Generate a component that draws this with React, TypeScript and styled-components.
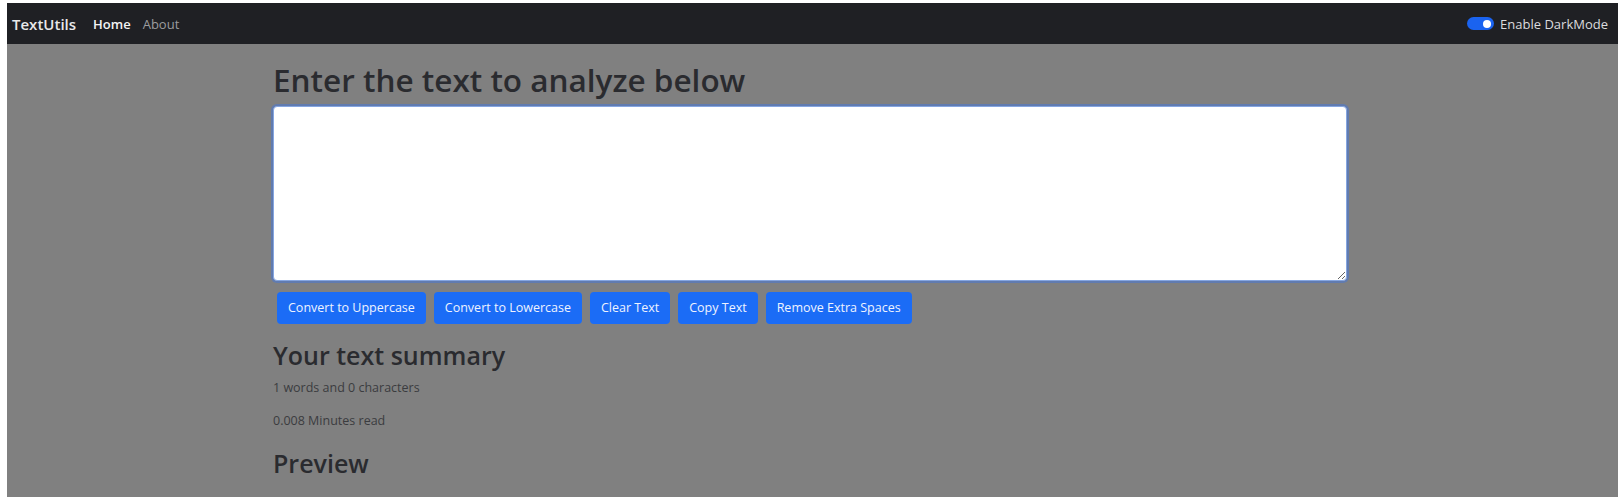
import styled, { createGlobalStyle } from 'styled-components';

const GlobalStyle = createGlobalStyle`
	html, body {
		margin: 0;
		background: #ffffff;
	}
	body {
		padding: 3px 5px 5px 7px;
		font-family: 'Open Sans', 'Noto Sans', sans-serif;
	}
	* {
		box-sizing: border-box;
	}
`;

const buttons = [
	'Convert to Uppercase',
	'Convert to Lowercase',
	'Clear Text',
	'Copy Text',
	'Remove Extra Spaces',
];

function App() {
	return (
		<>
			<GlobalStyle />
			<Frame>
				<Navbar>
					<Brand>TextUtils</Brand>
					<NavLink $active>Home</NavLink>
					<NavLink>About</NavLink>
					<Switch>
						<SwitchTrack>
							<SwitchKnob />
						</SwitchTrack>
						<SwitchLabel>Enable DarkMode</SwitchLabel>
					</Switch>
				</Navbar>
				<Container>
					<Title>Enter the text to analyze below</Title>
					<TextBox autoFocus defaultValue="" />
					<ButtonRow>
						{buttons.map((label) => (
							<Button key={label}>{label}</Button>
						))}
					</ButtonRow>
					<SubTitle $top={16}>Your text summary</SubTitle>
					<Info>1 words and 0 characters</Info>
					<Info>0.008 Minutes read</Info>
					<SubTitle $top={4}>Preview</SubTitle>
				</Container>
			</Frame>
		</>
	);
}

const Frame = styled.div`
	display: flex;
	flex-direction: column;
	height: 494px;
	background: #808080;
	overflow: hidden;
`;

const Navbar = styled.nav`
	display: flex;
	align-items: center;
	height: 41px;
	padding: 0 10px 0 5px;
	background: #1f2024;
	flex-shrink: 0;
`;

const Brand = styled.span`
	font-size: 15px;
	font-weight: 600;
	color: #e9e9ea;
	margin-right: 17px;
`;

const NavLink = styled.a<{ $active?: boolean }>`
	font-size: 13px;
	font-weight: ${(p) => (p.$active ? 600 : 400)};
	color: ${(p) => (p.$active ? '#f4f4f4' : '#9b9c9f')};
	margin-right: 12px;
	cursor: pointer;
`;

const Switch = styled.label`
	display: flex;
	align-items: center;
	gap: 6px;
	margin-left: auto;
`;

const SwitchTrack = styled.span`
	display: flex;
	align-items: center;
	justify-content: flex-end;
	width: 27px;
	height: 13px;
	padding: 0 3px;
	border-radius: 7px;
	background: #1a63f0;
`;

const SwitchKnob = styled.span`
	width: 8px;
	height: 8px;
	border-radius: 50%;
	background: #ffffff;
`;

const SwitchLabel = styled.span`
	font-size: 13px;
	color: #dcdcde;
`;

const Container = styled.main`
	display: flex;
	flex-direction: column;
	width: 1074px;
	margin-left: 266px;
`;

const Title = styled.h1`
	margin: 17px 0 7px;
	font-size: 31.5px;
	font-weight: 600;
	line-height: 1.2;
	color: #2a2b2f;
`;

const TextBox = styled.textarea`
	width: 1074px;
	height: 175px;
	padding: 6px 10px;
	font-family: inherit;
	font-size: 14px;
	color: #555;
	background: #ffffff;
	border: 1px solid #86a6e0;
	border-radius: 4px;
	box-shadow: 0 0 0 2px rgba(80, 120, 200, 0.65);
	outline: none;
	caret-color: #888;
`;

const ButtonRow = styled.div`
	display: flex;
	gap: 8px;
	margin: 11px 0 0 4px;
`;

const Button = styled.button`
	height: 32px;
	padding: 0 11px;
	font-family: inherit;
	font-size: 12.5px;
	color: #eef3ff;
	background: #1b6cf6;
	border: none;
	border-radius: 4px;
	cursor: pointer;
`;

const SubTitle = styled.h2<{ $top: number }>`
	margin: ${(p) => p.$top}px 0 9px;
	font-size: 25px;
	font-weight: 600;
	line-height: 1.2;
	color: #2a2b2f;
`;

const Info = styled.p`
	margin: 0 0 14px;
	font-size: 12.5px;
	line-height: 1.5;
	color: #3b3c3f;
`;

export default App;
